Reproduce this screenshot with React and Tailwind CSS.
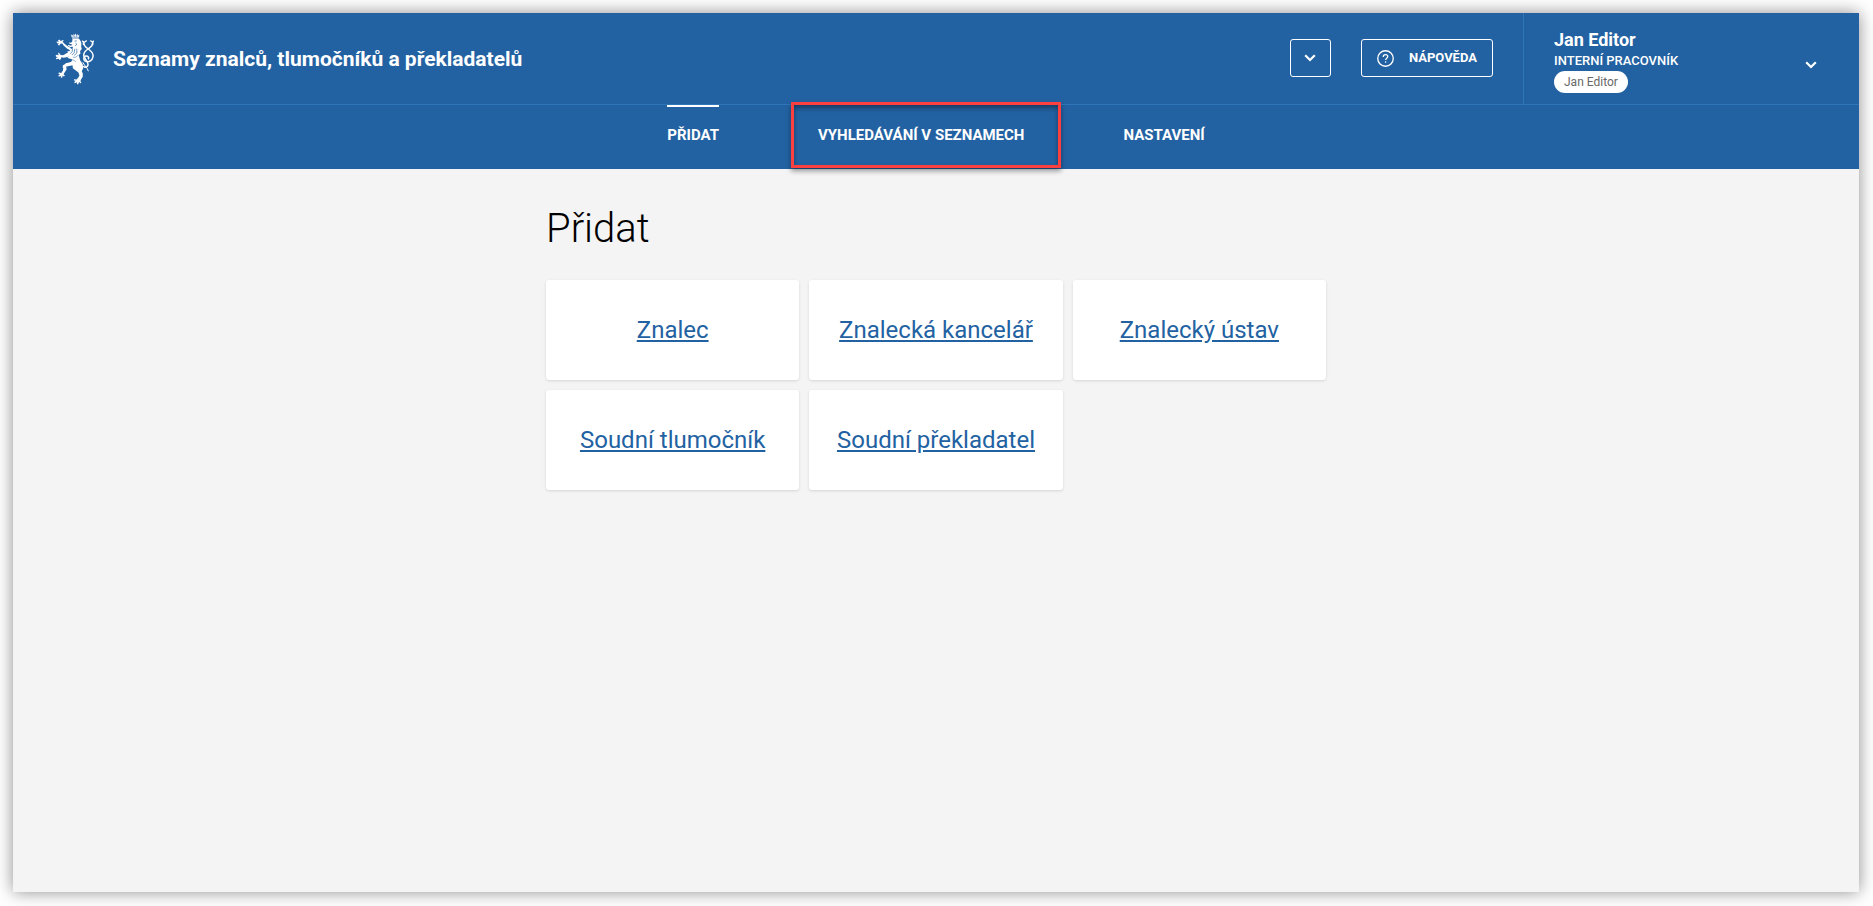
import React from "react";

const navItems = [
  { label: "Přidat", active: true },
  { label: "Vyhledávání v seznamech", highlighted: true },
  { label: "Nastavení" },
];

const cards = [
  "Znalec",
  "Znalecká kancelář",
  "Znalecký ústav",
  "Soudní tlumočník",
  "Soudní překladatel",
];

function Chevron() {
  return (
    <svg viewBox="0 0 12 8" className="h-2 w-3" fill="none" stroke="currentColor" strokeWidth="2.2" aria-hidden="true">
      <path d="M1.2 1.2 6 6l4.800-4.800" />
    </svg>
  );
}

function HelpIcon() {
  return (
    <svg viewBox="0 0 18 18" className="size-[17px]" fill="none" stroke="currentColor" aria-hidden="true">
      <circle cx="9" cy="9" r="8.200" strokeWidth="1.400" />
      <path d="M6.600 7.300C6.600 5.800 7.500 4.900 9 4.900s2.400.9 2.400 2.100c0 1.700-2.300 1.900-2.300 3.700" strokeWidth="1.300" />
      <path d="M9.100 12v1.400" strokeWidth="1.400" />
    </svg>
  );
}

function Lion() {
  return (
    <svg viewBox="0 0 118 156" className="h-[52px] w-[39px] shrink-0" fill="currentColor" stroke="none" aria-hidden="true">
      {/* crown */}
      <path d="M48 4l5 3 3-5 4 4 1-6 3 6 5-4 1 5 4-2-3 11H52z" />
      {/* head and mane */}
      <path d="M53 17h20l5 7 2 8-1 8 2 8-5 6 1 7-5 5-2 9-9 4-13-1-11-4 6-5-7-1-4-6 7-2-2-5 8-1-1-6 8-1 3-6-9 1-8-4 3-2 8 2 3-4-8-2-2-4 6 1 4-3z" />
      {/* upper fore leg */}
      <path d="M48 52L37 47 26 37l-3-5-6-1-4 6-4-1 2-6-5 0-1-5 7 1-3-4 4-3 5 5 3-3h6l-4 5 5 5 9 8 11 6z" />
      {/* lower fore leg */}
      <path d="M46 60l-11 1-11 6-7-1-3-5-5-3 1 6 2 3-6-2-4 2 1 4 6 1-6 3 1 4 7-2 3 4 4-3 1-5 8 1 13-3 12-4z" />
      {/* torso and hind legs */}
      <path d="M44 70l28-3 4 15 8 12 1 12-4 9 3 7v10l-5 7-2 6 3 5-4 1-3-4-3 8-4-1 1-6-7 3-2-3 5-4-6-1 1-4 7 1 5-5 4-7-3-9-9-7-8-6-1-9-10 2-9 2 1 9-6 9-3 5 4 5-3 2-4-3-1 6-4 1-1-6-5 3-2-4 5-4-5-2 2-3 7 1 5-7 1-7-2-3 1-6 11-6 12-2 5-7z" />
      <path d="M32 91l14-3 12-4-5 11-21 2z" />
      {/* tail */}
      <g fill="none" stroke="currentColor" strokeWidth="4.500">
        <path d="M86 24c-1 12 5 17 14 23 10 7 17 13 15 24-2 12-12 18-22 14-8-4-8-14 0-16 7-1 11 5 7 10" />
        <path d="M114 24c2 13-5 17-13 23-9 6-15 11-14 20 2 11 13 18 13 28-1 8-8 10-15 5" />
        <path d="M84 88c7 13 13 14 17 27" strokeWidth="3" />
        <path d="M82 23l6 5 8-6M107 22l6 5 5-4M84 33l6 1M111 34l5-1" strokeWidth="4" />
      </g>
      {/* contour gaps in the coat */}
      <g fill="none" stroke="#2362a2" strokeWidth="2">
        <path d="M51 12h20M56 4l2 6M67 4l-2 6M59 24l7-1M62 30l4 3-5 6M53 46l-1 10-6 6M60 47l-2 12-7 7M66 47v13l-8 7" />
        <path d="M54 72c6 3 12 0 16-6M46 80c8-1 12 2 17 6" strokeWidth="1.500" />
      </g>
    </svg>
  );
}

export default function App() {
  return (
    <div className="flex min-h-screen bg-white p-[13px] pr-[14px] pb-[14px] font-['Roboto',sans-serif] text-black">
      <div className="flex min-w-0 flex-1 flex-col bg-[#f4f4f4] shadow-[0_0_16px_rgba(0,0,0,0.45)]">
        <header className="bg-[#2362a2] text-white">
          <div className="flex items-stretch border-b border-[#2f75b8]">
            <div className="flex flex-1 items-center gap-[19px] pl-[42px]">
              <Lion />
              <span className="text-[21px] leading-8 font-bold">Seznamy znalců, tlumočníků a překladatelů</span>
            </div>
            <div className="flex items-start gap-[30px] pt-[26px] pr-[30px]">
              <button type="button" aria-label="Další možnosti" className="flex h-[38px] w-[41px] items-center justify-center rounded-[3px] border border-white">
                <Chevron />
              </button>
              <button type="button" className="flex h-[38px] items-center gap-[15px] rounded-[3px] border border-white px-[15px] text-[13px] leading-5 font-bold uppercase">
                <HelpIcon />
                Nápověda
              </button>
            </div>
            <button type="button" aria-label="Jan Editor, interní pracovník" className="flex w-[336px] items-center justify-between border-l border-[#2f75b8] pt-4 pr-[42px] pb-[11px] pl-[30px] text-left">
              <span className="flex flex-col items-start">
                <span className="text-lg leading-[22px] font-bold">Jan Editor</span>
                <span className="text-[13px] leading-5 font-medium uppercase">Interní pracovník</span>
                <span className="rounded-full bg-white px-2.5 text-xs leading-[22px] text-[#686868]">Jan Editor</span>
              </span>
              <span className="pt-2">
                <Chevron />
              </span>
            </button>
          </div>
          <nav className="flex h-16 justify-center gap-[99px] text-[15px] leading-5 font-bold uppercase">
            {navItems.map((item) => (
              <a
                key={item.label}
                href="#"
                className={
                  item.active
                    ? "relative border-t-2 border-white pt-[18px]"
                    : "relative border-t-2 border-transparent pt-[18px]"
                }
              >
                {item.label}
                {item.highlighted && (
                  <span className="pointer-events-none absolute -top-[5px] -right-[37px] -left-[27px] h-[66px] border-[3px] border-[#fc4040] shadow-[0_3px_5px_rgba(0,0,0,0.4),inset_0_3px_5px_rgba(0,0,0,0.4)]" />
                )}
              </a>
            ))}
          </nav>
        </header>
        <main className="mx-auto w-full max-w-[780px] pt-9">
          <h1 className="text-[40px] leading-[48px] font-light">Přidat</h1>
          <div className="mt-[27px] grid grid-cols-3 gap-2.5">
            {cards.map((card) => (
              <div key={card} className="flex h-[100px] items-center justify-center rounded-[3px] bg-white shadow-[0_1px_3px_rgba(0,0,0,0.13)]">
                <a href="#" className="text-2xl text-[#2362a2] underline">
                  {card}
                </a>
              </div>
            ))}
          </div>
        </main>
      </div>
    </div>
  );
}
